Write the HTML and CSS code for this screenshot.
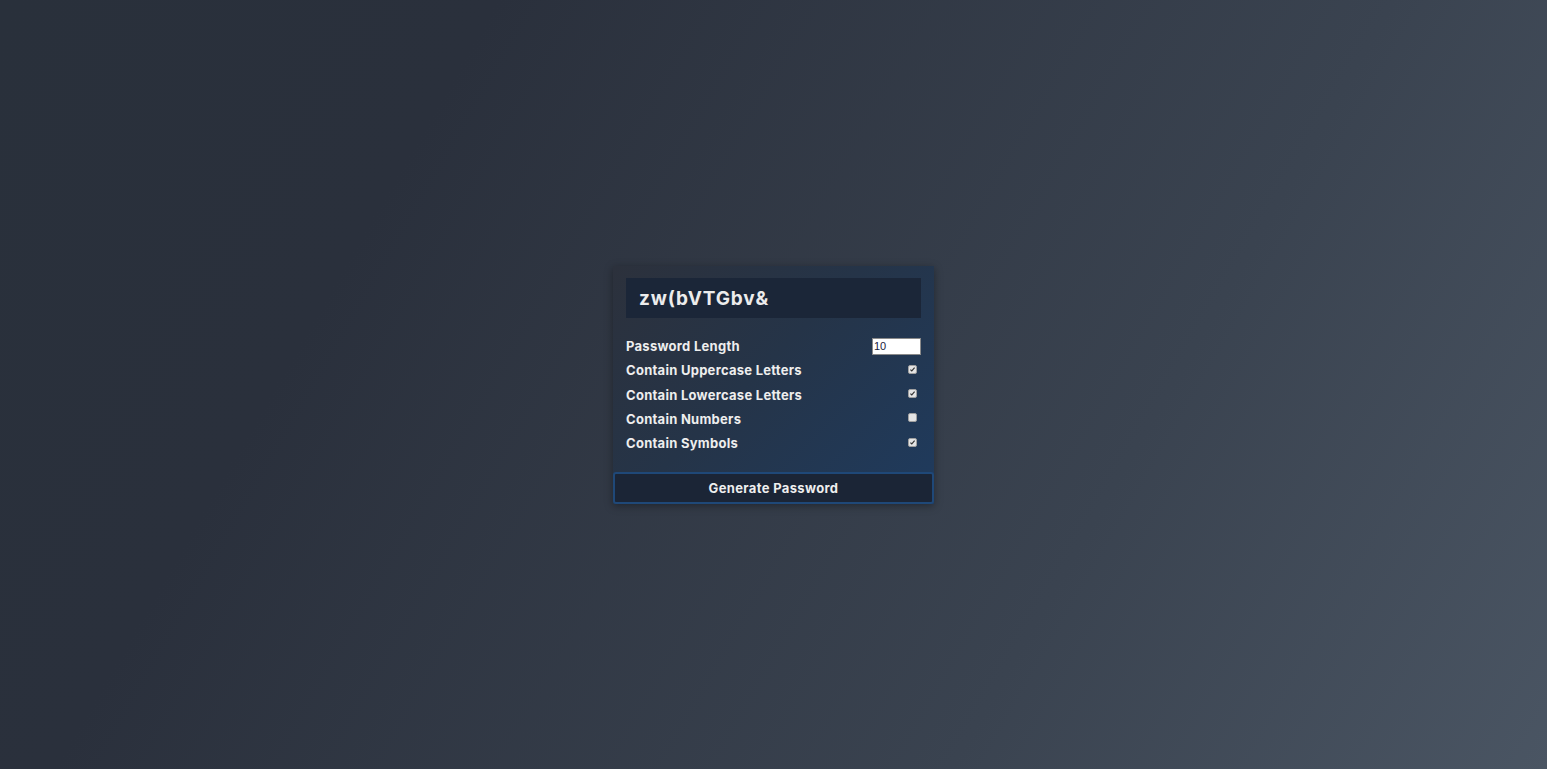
FILE: index.html
```html
<!DOCTYPE html>
<html lang="en">
<head>
<meta charset="utf-8">
<title>Password Generator</title>
<link rel="stylesheet" href="styles.css">
</head>
<body>
<main class="page">
  <div class="card">
    <div class="content">
      <div class="result">zw(bVTGbv&amp;</div>
      <div class="settings">
        <div class="setting">
          <label for="length">Password Length</label>
          <input type="number" id="length" class="num" value="10">
        </div>
        <div class="setting">
          <label for="upper">Contain Uppercase Letters</label>
          <input type="checkbox" id="upper" class="chk" checked>
        </div>
        <div class="setting">
          <label for="lower">Contain Lowercase Letters</label>
          <input type="checkbox" id="lower" class="chk" checked>
        </div>
        <div class="setting">
          <label for="numbers">Contain Numbers</label>
          <input type="checkbox" id="numbers" class="chk">
        </div>
        <div class="setting">
          <label for="symbols">Contain Symbols</label>
          <input type="checkbox" id="symbols" class="chk" checked>
        </div>
      </div>
    </div>
    <button class="btn">Generate Password</button>
  </div>
</main>
</body>
</html>
```

FILE: styles.css
```css
* { box-sizing: border-box; }
html, body { height: 100%; }
body {
  margin: 0;
  font-family: "Inter", "Noto Sans", sans-serif;
  background: linear-gradient(120deg, #29303b 0%, #2a303c 25%, #3a4350 70%, #4a5563 100%);
  color: #eeeeee;
}
.page {
  height: 100%;
  display: flex;
  align-items: center;
  justify-content: center;
}
.card {
  width: 321px;
  margin-top: 1px;
  background: linear-gradient(135deg, #2c313c 0%, #253448 45%, #1f3b5e 100%);
  box-shadow: 0 2px 8px rgba(0, 0, 0, 0.35);
  display: flex;
  flex-direction: column;
}
.content {
  padding: 12px 13px 0;
}
.result {
  background: #1b2638;
  height: 40px;
  display: flex;
  align-items: center;
  padding: 0 13px;
  font-size: 19px;
  font-weight: 700;
  color: #ececec;
  letter-spacing: 0.85px;
}
.settings {
  margin-top: 19px;
  display: flex;
  flex-direction: column;
  gap: 6.25px;
  padding-bottom: 20px;
}
.setting {
  display: flex;
  justify-content: space-between;
  align-items: center;
  height: 18px;
  font-size: 13px;
  font-weight: 700;
}
.setting label { letter-spacing: 0.27px; }
.num {
  width: 49px;
  height: 17px;
  border: 1px solid #8a8a8a;
  background: #ffffff;
  color: #1a1a40;
  font-family: "Liberation Sans", Arial, sans-serif;
  font-size: 11px;
  padding: 0 1px;
  margin: 0;
}
.chk {
  appearance: none;
  -webkit-appearance: none;
  width: 9px;
  height: 9px;
  margin: 0 4px 2px 0;
  border: 1px solid #a0a0a0;
  border-radius: 2px;
  background: #e4e4e4;
}
.chk:checked {
  background: #e4e4e4 url("data:image/svg+xml,%3Csvg xmlns='http://www.w3.org/2000/svg' viewBox='0 0 9 9'%3E%3Cpath d='M1.8 4.6 L3.6 6.4 L7.2 2.2' fill='none' stroke='%23333' stroke-width='1.5'/%3E%3C/svg%3E") no-repeat center / 100% 100%;
}
.btn {
  height: 32px;
  width: 100%;
  background: #1b2536;
  border: 2px solid #1f4878;
  border-radius: 3px;
  color: #eeeeee;
  font-family: "Inter", "Noto Sans", sans-serif;
  font-size: 13px;
  font-weight: 700;
  letter-spacing: 0.35px;
  cursor: pointer;
}
```
